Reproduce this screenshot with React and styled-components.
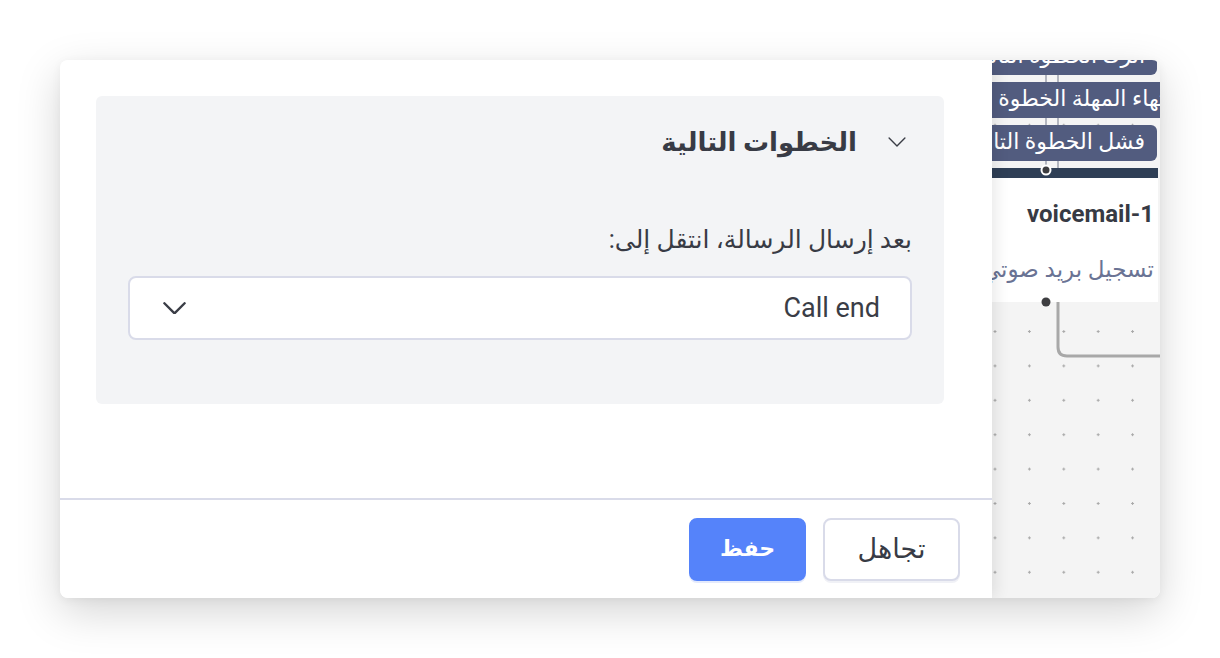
import React from "react";
import styled, { createGlobalStyle } from "styled-components";

const Global = createGlobalStyle`
  html, body { margin: 0; padding: 0; background: #ffffff; }
  body { font-family: Roboto, "Noto Sans", "DejaVu Sans", sans-serif; }
  * { box-sizing: border-box; }
`;

const Page = styled.div`
  width: 1220px;
  height: 658px;
  padding: 60px;
`;

const Frame = styled.div`
  width: 1100px;
  height: 538px;
  display: flex;
  direction: ltr;
  border-radius: 8px;
  overflow: hidden;
  box-shadow: 0 14px 44px rgba(0, 0, 0, 0.17), 0 2px 10px rgba(0, 0, 0, 0.05);
`;

const Dialog = styled.div`
  width: 932px;
  flex: none;
  display: flex;
  flex-direction: column;
  direction: rtl;
  background: #ffffff;
  position: relative;
  z-index: 2;
  box-shadow: 4px 0 14px rgba(0, 0, 0, 0.09);
`;

const Body = styled.div`
  flex: 1;
  padding: 36px 48px 0 36px;
`;

const Section = styled.div`
  height: 308px;
  background: #f3f4f6;
  border-radius: 6px;
  padding: 26px 38px 0 32px;
`;

const Header = styled.div`
  height: 40px;
  display: flex;
  align-items: center;
  gap: 31px;
`;

const Title = styled.h2`
  margin: 0;
  font-size: 26px;
  line-height: 40px;
  font-weight: 700;
  color: #383b45;
`;

const Label = styled.div`
  margin: 64px -6px 0 0;
  font-size: 25px;
  line-height: 28px;
  color: #383b45;
`;

const Select = styled.div`
  margin-top: 22px;
  margin-right: -6px;
  height: 64px;
  border: 2px solid #d9dbe9;
  border-radius: 8px;
  background: #ffffff;
  display: flex;
  align-items: center;
  justify-content: space-between;
  padding: 0 30px 0 33px;
`;

const SelectValue = styled.span`
  direction: ltr;
  font-family: Roboto, sans-serif;
  font-size: 27px;
  color: #3a3d46;
`;

const Footer = styled.div`
  height: 100px;
  border-top: 2px solid #d9dbe9;
  display: flex;
  align-items: center;
  gap: 17px;
  padding: 0 32px;
`;

const Button = styled.button`
  height: 63px;
  width: ${(p) => p.$w}px;
  border-radius: 8px;
  font-family: inherit;
  font-size: ${(p) => (p.$primary ? 22 : 27)}px;
  line-height: 1;
  cursor: pointer;
  border: 2px solid ${(p) => (p.$primary ? "#5583fa" : "#d9dbe9")};
  background: ${(p) => (p.$primary ? "#5583fa" : "#ffffff")};
  color: ${(p) => (p.$primary ? "#ffffff" : "#383b45")};
  font-weight: ${(p) => (p.$primary ? 700 : 400)};
  box-shadow: ${(p) => (p.$primary ? "0 2px 0 #e4eafc" : "0 2px 0 #f0f1f6")};
`;

const Canvas = styled.div`
  flex: 1;
  position: relative;
  overflow: hidden;
  direction: rtl;
  background-color: #f4f4f4;
  background-image: radial-gradient(circle, #a9a9a9 1px, transparent 1.4px);
  background-size: 34.4px 34.4px;
  background-position: -14.2px 13.6px;
`;

const Wires = styled.svg`
  position: absolute;
  left: 0;
  top: 0;
`;

const Chips = styled.div`
  position: absolute;
  top: -21px;
  right: 3px;
  display: flex;
  flex-direction: column;
  align-items: flex-start;
  gap: 7px;
`;

const Chip = styled.div`
  height: 36px;
  line-height: 34px;
  padding: 0 12px;
  border-radius: 6px;
  background: #525c7f;
  color: #ffffff;
  font-size: 22px;
  white-space: nowrap;
  margin-right: ${(p) => p.$shift || 0}px;
`;

const Node = styled.div`
  position: absolute;
  top: 108px;
  left: -200px;
  right: 2px;
`;

const NodeBar = styled.div`
  height: 10px;
  background: #2f3f56;
`;

const NodeBody = styled.div`
  height: 124px;
  background: #ffffff;
  padding: 22px 4px 0 0;
`;

const NodeTitle = styled.div`
  direction: ltr;
  text-align: right;
  font-family: Roboto, sans-serif;
  font-weight: 700;
  font-size: 24px;
  color: #373a44;
  line-height: 28px;
`;

const NodeSub = styled.div`
  margin-top: 28px;
  font-size: 23px;
  line-height: 28px;
  color: #6a7394;
  white-space: nowrap;
`;

const Dot = styled.span`
  position: absolute;
  width: ${(p) => (p.$ring ? 11 : 9)}px;
  height: ${(p) => (p.$ring ? 11 : 9)}px;
  border-radius: 50%;
  background: #3d3d40;
  border: ${(p) => (p.$ring ? "2px solid #ffffff" : "none")};
  left: ${(p) => p.$x}px;
  top: ${(p) => p.$y}px;
  transform: translate(-50%, -50%);
`;

const Chevron = ({ size = 18, stroke = 1.6 }) => (
  <svg width={size} height={size * 0.55} viewBox="0 0 18 10" fill="none">
    <path d="M1 1l8 8 8-8" stroke="#3a3d46" strokeWidth={stroke} strokeLinecap="round" strokeLinejoin="round" />
  </svg>
);

export default function App() {
  return (
    <>
      <Global />
      <Page>
        <Frame>
          <Dialog>
            <Body>
              <Section>
                <Header>
                  <Chevron size={18} stroke={1.4} />
                  <Title>الخطوات التالية</Title>
                </Header>
                <Label>بعد إرسال الرسالة، انتقل إلى:</Label>
                <Select>
                  <SelectValue>Call end</SelectValue>
                  <Chevron size={23} stroke={1.9} />
                </Select>
              </Section>
            </Body>
            <Footer>
              <Button $w={137}>تجاهل</Button>
              <Button $primary $w={117}>حفظ</Button>
            </Footer>
          </Dialog>
          <Canvas>
            <Wires width="168" height="538" viewBox="0 0 168 538">
              <line x1="54" y1="0" x2="54" y2="110" stroke="#b3b6bf" strokeWidth="2" />
              <line x1="66" y1="0" x2="66" y2="110" stroke="#b3b6bf" strokeWidth="2" />
              <path d="M66 242 V287 Q66 296 75 296 H170" stroke="#a8a8a8" strokeWidth="3" fill="none" />
            </Wires>
            <Chips>
              <Chip>اترك الخطوة التالية</Chip>
              <Chip $shift={-33}>انتهاء المهلة الخطوة التالية</Chip>
              <Chip>فشل الخطوة التالية</Chip>
            </Chips>
            <Node>
              <NodeBar />
              <NodeBody>
                <NodeTitle>voicemail-1</NodeTitle>
                <NodeSub>تسجيل بريد صوتي</NodeSub>
              </NodeBody>
            </Node>
            <Dot $ring $x={54} $y={110} />
            <Dot $x={54} $y={242} />
          </Canvas>
        </Frame>
      </Page>
    </>
  );
}
